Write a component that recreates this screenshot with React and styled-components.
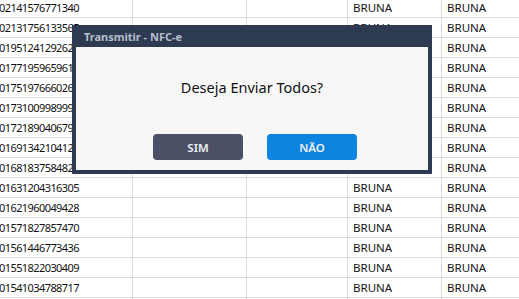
import React from 'react'
import styled, { createGlobalStyle } from 'styled-components'

const Global = createGlobalStyle`
  html, body {
    margin: 0;
    padding: 0;
    background: #ffffff;
    overflow: hidden;
  }
  body {
    font-family: "Noto Sans", "Open Sans", sans-serif;
  }
`

const Page = styled.div`
  position: relative;
  width: 519px;
  height: 299px;
  overflow: hidden;
  background: #ffffff;
`

const Grid = styled.div`
  display: grid;
  grid-template-columns: 138px 114px 101px 94px 120px;
  margin-top: -2px;
  margin-left: -5px;
`

const Cell = styled.div`
  height: 19px;
  border-right: 1px solid #d9dadc;
  border-bottom: 1px solid #d9dadc;
  display: flex;
  align-items: center;
  padding-left: ${p => (p.$num ? '4px' : '5px')};
  font-size: ${p => (p.$num ? '11px' : '11.5px')};
  letter-spacing: ${p => (p.$num ? '-0.58px' : '0')};
  color: #111111;
  white-space: nowrap;
  overflow: hidden;
  &:nth-child(5n) {
    border-right: none;
  }
`

const Dialog = styled.div`
  position: absolute;
  left: 72px;
  top: 25px;
  width: 360px;
  height: 149px;
  box-sizing: border-box;
  background: #2d3a51;
  padding: 0 4px 4px;
  display: flex;
  flex-direction: column;
`

const TitleBar = styled.div`
  height: 22px;
  display: flex;
  align-items: center;
  padding-left: 8px;
  font-size: 11px;
  font-weight: 700;
  color: #b7bfcc;
`

const Body = styled.div`
  flex: 1;
  background: #f7f7f7;
  display: flex;
  flex-direction: column;
  align-items: center;
`

const Message = styled.div`
  margin-top: 29px;
  font-size: 14.5px;
  color: #111111;
  line-height: 22px;
`

const Actions = styled.div`
  margin-top: 36px;
  padding-left: 6px;
  display: flex;
  gap: 24px;
`

const Button = styled.button`
  width: 90px;
  height: 26px;
  border: none;
  border-radius: 4px;
  background: ${p => (p.$primary ? '#0b83df' : '#4b5066')};
  color: #eef0f4;
  font-family: "Noto Sans", "Open Sans", sans-serif;
  font-size: 11.5px;
  font-weight: 600;
  cursor: pointer;
  padding: 0;
`

const codes = [
  '02141576771340',
  '02131756133565',
  '01951241292620',
  '01771959659610',
  '01751976660260',
  '01731009989990',
  '01721890406790',
  '01691342104120',
  '01681837584820',
  '01631204316305',
  '01621960049428',
  '01571827857470',
  '01561446773436',
  '01551822030409',
  '01541034788717',
]

export default function App() {
  return (
    <Page>
      <Global />
      <Grid>
        {codes.map((c) => (
          <React.Fragment key={c}>
            <Cell $num>{c}</Cell>
            <Cell />
            <Cell />
            <Cell>BRUNA</Cell>
            <Cell>BRUNA</Cell>
          </React.Fragment>
        ))}
        <Cell />
        <Cell />
        <Cell />
        <Cell />
        <Cell />
      </Grid>
      <Dialog>
        <TitleBar>Transmitir - NFC-e</TitleBar>
        <Body>
          <Message>Deseja Enviar Todos?</Message>
          <Actions>
            <Button>SIM</Button>
            <Button $primary>NÃO</Button>
          </Actions>
        </Body>
      </Dialog>
    </Page>
  )
}
